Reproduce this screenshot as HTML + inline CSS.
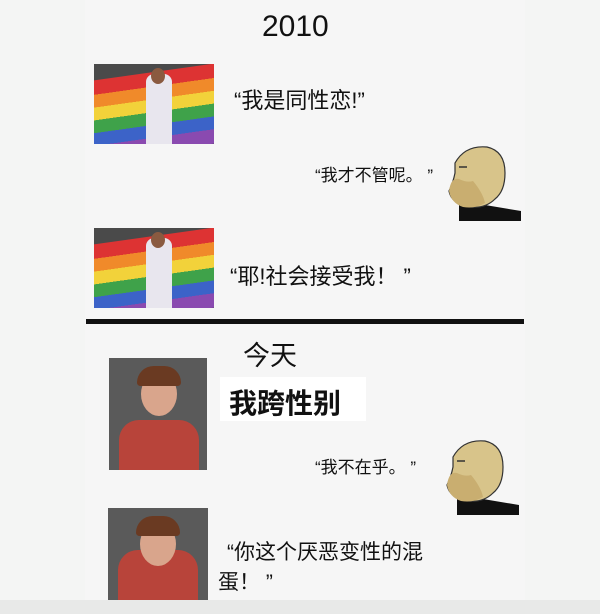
<!DOCTYPE html>
<html><head><meta charset="utf-8"><style>
*{margin:0;padding:0;box-sizing:border-box}
body{width:600px;height:614px;background:#f4f5f4;position:relative;overflow:hidden;font-family:"Liberation Sans","Noto Sans CJK SC",sans-serif;color:#111}
.a{position:absolute;white-space:nowrap}
.flag{position:absolute;width:120px;height:80px;background:#4a4a4a;overflow:hidden}
.flag .r{position:absolute;left:0;width:120px;height:80px;background:linear-gradient(to bottom,#d33 0 18%,#f08a2a 18% 34%,#f2d23a 34% 50%,#3fa24a 50% 66%,#3c63c8 66% 82%,#8a4ab0 82% 100%);transform:skewY(-8deg);top:8px}
.flag .man{position:absolute;left:52px;top:10px;width:26px;height:70px;background:#e8e6ee;border-radius:8px 8px 0 0}
.flag .hd{position:absolute;left:57px;top:4px;width:14px;height:16px;background:#8a5a40;border-radius:50%}
.w{position:absolute;background:#5a5a5a;overflow:hidden}
.w .b{position:absolute;left:10px;bottom:0;width:80px;height:50px;background:#b8443a;border-radius:20px 20px 0 0}
.w .f{position:absolute;left:32px;top:14px;width:36px;height:44px;background:#d9a58c;border-radius:50%}
.w .h{position:absolute;left:28px;top:8px;width:44px;height:20px;background:#6a3a22;border-radius:20px 20px 4px 4px}
</style></head><body>
<div class="a" style="left:85px;top:0;width:440px;height:600px;background:#f6f6f6"></div>
<div class="a" style="left:0;top:600px;width:600px;height:14px;background:#e8e9e8"></div>
<div class="a" style="left:262px;top:10px;font-size:30px">2010</div>

<div class="flag" style="left:94px;top:64px"><div class="r"></div><div class="man"></div><div class="hd"></div></div>
<div class="a" style="left:234px;top:83px;font-size:22px">“我是同性恋!”</div>
<div class="a" style="left:315px;top:161px;font-size:17px">“我才不管呢。 ”</div>
<svg class="a" style="left:445px;top:143px" width="78" height="78" viewBox="0 0 78 78">
<path d="M14 62 Q30 56 40 62 L76 68 L76 78 L14 78Z" fill="#111"/>
<path d="M10 20 Q20 2 42 4 Q60 8 60 30 Q60 48 50 56 Q40 66 24 64 Q6 60 4 48 Q8 40 10 30Z" fill="#d8c48a" stroke="#333" stroke-width="1.2"/>
<path d="M4 48 Q6 34 14 36 Q22 40 28 38 Q38 50 40 60 Q30 66 18 64 Q6 60 4 48Z" fill="#c9ae70"/>
<path d="M14 24 L22 24" stroke="#333" stroke-width="1.5"/>
</svg>

<div class="flag" style="left:94px;top:228px"><div class="r"></div><div class="man"></div><div class="hd"></div></div>
<div class="a" style="left:230px;top:259px;font-size:22px">“耶!社会接受我！ ”</div>

<div class="a" style="left:86px;top:319px;width:438px;height:5px;background:#111"></div>
<div class="a" style="left:243px;top:334px;font-size:27px">今天</div>

<div class="w" style="left:109px;top:358px;width:98px;height:112px"><div class="b"></div><div class="f"></div><div class="h"></div></div>
<div class="a" style="left:220px;top:377px;width:146px;height:44px;background:#fff"></div>
<div class="a" style="left:229px;top:382px;font-size:28px;font-weight:bold">我跨性别</div>
<div class="a" style="left:315px;top:453px;font-size:17px">“我不在乎。 ”</div>
<svg class="a" style="left:443px;top:437px" width="78" height="78" viewBox="0 0 78 78">
<path d="M14 62 Q30 56 40 62 L76 68 L76 78 L14 78Z" fill="#111"/>
<path d="M10 20 Q20 2 42 4 Q60 8 60 30 Q60 48 50 56 Q40 66 24 64 Q6 60 4 48 Q8 40 10 30Z" fill="#d8c48a" stroke="#333" stroke-width="1.2"/>
<path d="M4 48 Q6 34 14 36 Q22 40 28 38 Q38 50 40 60 Q30 66 18 64 Q6 60 4 48Z" fill="#c9ae70"/>
<path d="M14 24 L22 24" stroke="#333" stroke-width="1.5"/>
</svg>

<div class="w" style="left:108px;top:508px;width:100px;height:92px"><div class="b"></div><div class="f"></div><div class="h"></div></div>
<div class="a" style="left:227px;top:536px;font-size:21px">“你这个厌恶变性的混</div>
<div class="a" style="left:218px;top:566px;font-size:21px">蛋！ ”</div>
</body></html>
